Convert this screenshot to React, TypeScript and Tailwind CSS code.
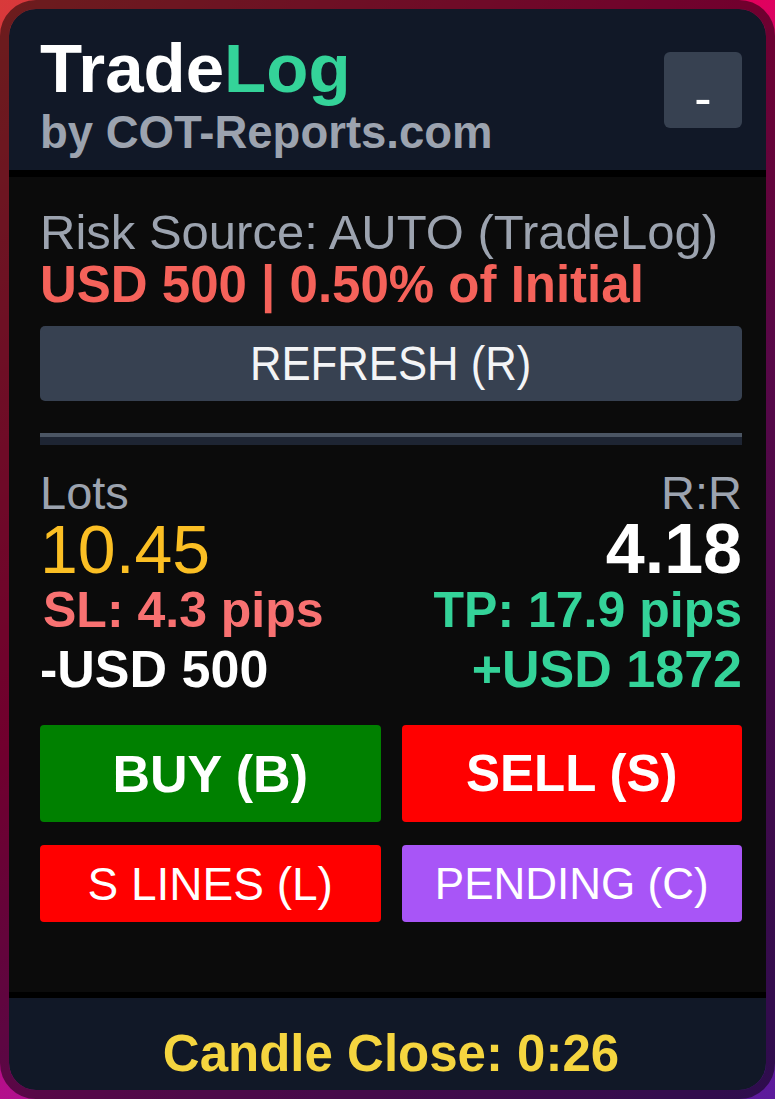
export default function App() {
  return (
    <div className="w-[775px] h-[1099px] bg-[linear-gradient(135deg,#d83a3a_0%,#e2005c_40%,#b0108f_60%,#5b1a9c_100%)] font-['Liberation_Sans',Arial,sans-serif]">
      <div className="h-full rounded-[36px] border-[9px] border-black/50 bg-clip-padding overflow-hidden flex flex-col">
        {/* Header */}
        <div className="bg-[#111827] border-b-[7px] border-black pl-[31px] pr-[24px] pt-[26px] pb-[15px] flex justify-between items-start">
          <div>
            <div className="text-[69px] leading-[68px] font-bold text-white">
              Trade<span className="text-[#34d399]">Log</span>
            </div>
            <div className="mt-[7px] text-[45.5px] leading-[45px] font-bold text-[#9ca3af] whitespace-nowrap">by COT-Reports.com</div>
          </div>
          <button className="mt-[17px] w-[78px] h-[76px] rounded-[6px] bg-[#374151] text-white text-[52px] leading-none flex items-center justify-center pt-[15px]">
            -
          </button>
        </div>

        {/* Body */}
        <div className="flex-1 bg-[#0b0b0b] pl-[31px] pr-[24px] pt-[31px]">
          <div className="text-[49px] leading-[48px] text-[#9ca3af] whitespace-nowrap">Risk Source: AUTO (TradeLog)</div>
          <div className="mt-[4px] text-[51px] leading-[50px] font-bold text-[#f5625a] whitespace-nowrap">USD 500 | 0.50% of Initial</div>
          <button className="mt-[16px] w-full h-[75px] rounded-[5px] bg-[#374151] text-[#f3f4f6] text-[48px] leading-none flex items-center justify-center">
            <span className="inline-block scale-x-[0.91]">REFRESH (R)</span>
          </button>

          <div className="mt-[32px] h-[4px] bg-[#4b5563]" />
          <div className="h-[8px] bg-[#1e2533]" />

          <div className="mt-[26px] flex justify-between text-[47px] leading-[44px] text-[#9ca3af]">
            <span className="block h-[44px]">Lots</span>
            <span className="block h-[44px]">R:R</span>
          </div>
          <div className="flex justify-between leading-[68px]">
            <span className="block h-[68px] text-[68px] text-[#fbbf24]">10.45</span>
            <span className="block h-[68px] text-[70px] font-bold text-white">4.18</span>
          </div>
          <div className="mt-[2px] flex justify-between text-[50px] leading-[50px] font-bold">
            <span className="block text-[#f87171] pl-[3px]">SL: 4.3 pips</span>
            <span className="block text-[#34d399]">TP: 17.9 pips</span>
          </div>
          <div className="mt-[9px] flex justify-between text-[52px] leading-[50px] font-bold">
            <span className="block text-white">-USD 500</span>
            <span className="block text-[#34d399]">+USD 1872</span>
          </div>

          <div className="mt-[31px] grid grid-cols-2 gap-x-[21px] gap-y-[23px]">
            <button className="h-[97px] rounded-[4px] bg-[#008000] text-white text-[52px] font-bold leading-none flex items-center justify-center">
              BUY (B)
            </button>
            <button className="h-[97px] rounded-[4px] bg-[#ff0000] text-white text-[51px] font-bold leading-none flex items-center justify-center">
              SELL (S)
            </button>
            <button className="h-[77px] rounded-[4px] bg-[#ff0000] text-white text-[46px] leading-none flex items-center justify-center">
              S LINES (L)
            </button>
            <button className="h-[77px] rounded-[4px] bg-[#a855f7] text-white text-[44px] leading-none flex items-center justify-center">
              PENDING (C)
            </button>
          </div>
        </div>

        {/* Footer */}
        <div className="h-[98px] shrink-0 border-t-[6px] border-black bg-[#111827] pl-[31px] pr-[24px] pt-[32px] text-center">
          <span className="inline-block text-[51px] leading-[48px] font-bold text-[#f5d53f] whitespace-nowrap">
            Candle Close: 0:26
          </span>
        </div>
      </div>
    </div>
  );
}
